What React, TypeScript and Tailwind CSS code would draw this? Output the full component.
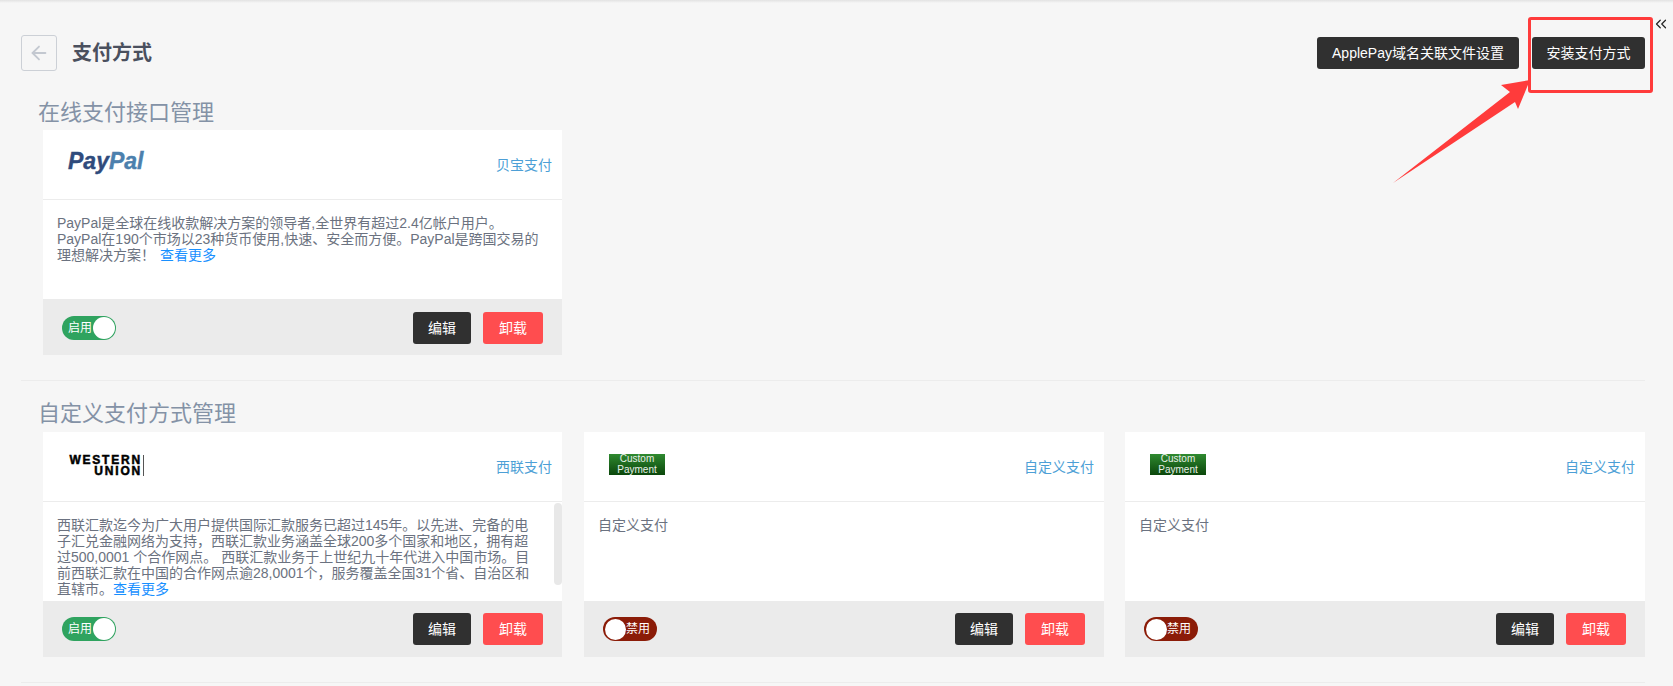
import { ArrowLeft, ChevronsLeft } from "lucide-react";
import type { ReactNode } from "react";

const FONT = "font-['Liberation_Sans','Noto_Sans_CJK_SC',sans-serif]";

function Toggle({ on }: { on: boolean }) {
  if (on) {
    return (
      <div className="flex h-[24px] w-[54px] items-center justify-between rounded-full bg-[#2fa35f] pl-[6px] pr-[1px] text-[12px] text-white">
        <span>启用</span>
        <span className="h-[22px] w-[22px] rounded-full bg-white" />
      </div>
    );
  }
  return (
    <div className="flex h-[24px] w-[54px] items-center justify-between rounded-full bg-[#8b1c08] pl-[2px] pr-[7px] text-[12px] text-white">
      <span className="h-[21px] w-[21px] rounded-full bg-white" />
      <span>禁用</span>
    </div>
  );
}

function Card({
  logo,
  label,
  on,
  scroll,
  narrow,
  lower,
  children,
}: {
  logo: ReactNode;
  label: string;
  on: boolean;
  scroll?: boolean;
  narrow?: boolean;
  lower?: boolean;
  children: ReactNode;
}) {
  return (
    <div className={narrow ? "w-[519px] bg-white" : "w-[520px] bg-white"}>
      <div className="relative h-[70px] border-b border-[#ececec]">
        {logo}
        <span className="absolute right-[10px] top-[26px] text-[14px] leading-[18px] text-[#4d9fd6]">{label}</span>
      </div>
      <div className="relative h-[99px] overflow-hidden pl-[14px] pr-[11px] pt-[15px] text-[14px] leading-[16px] text-[#6b7280]">
        <div className={scroll ? "w-[476px]" : ""}>{children}</div>
        {scroll && <div className="absolute right-0 top-[1px] h-[82px] w-[8px] rounded-[4px] bg-[#e8e8e8]" />}
      </div>
      <div
        className={
          lower
            ? "flex h-[56px] items-center justify-between bg-[#ebebeb] px-[19px] pt-[2px]"
            : "flex h-[56px] items-center justify-between bg-[#ebebeb] px-[19px]"
        }
      >
        <Toggle on={on} />
        <div className="flex gap-[12px]">
          <button className="h-[32px] w-[58px] rounded-[3px] bg-[#303030] text-[14px] text-white">编辑</button>
          <button className="h-[32px] w-[60px] rounded-[3px] bg-[#ff4d4f] text-[14px] text-white">卸载</button>
        </div>
      </div>
    </div>
  );
}

const PayPalLogo = (
  <div className="absolute left-[25px] top-[18px] text-[23px] font-bold italic leading-[26px] [-webkit-text-stroke:0.4px_currentColor]">
    <span className="text-[#2f4b7c]">Pay</span>
    <span className="text-[#4c80ad]">Pal</span>
  </div>
);

const WesternLogo = (
  <div className="absolute left-[26px] top-[23px] flex h-[21px] w-[75px] flex-col items-end border-r border-[#555] pr-[1px] text-[12px] font-bold leading-[10.5px] tracking-[1.8px] text-black [-webkit-text-stroke:0.5px_black]">
    <span>WESTERN</span>
    <span>UNION</span>
  </div>
);

const CustomLogo = (
  <div className="absolute left-[25px] top-[22px] flex h-[21px] w-[56px] flex-col items-center justify-center bg-gradient-to-b from-[#2f8a30] to-[#0b470b] text-[10px] leading-[10.5px] text-[#e8f0e8]">
    <span>Custom</span>
    <span>Payment</span>
  </div>
);

export default function App() {
  return (
    <div className={`relative h-[686px] overflow-hidden bg-[#f6f6f6] px-[21px] pt-[35px] ${FONT}`}>
      <div className="absolute inset-x-0 top-0 h-[3px] bg-gradient-to-b from-[#e2e2e2] to-[#f6f6f6]" />

      <div className="flex h-[36px] items-center justify-between pr-[7px]">
        <div className="flex items-center">
          <div className="flex h-[36px] w-[36px] items-center justify-center rounded-[3px] border border-[#ccd0d6]">
            <ArrowLeft size={22} className="text-[#c3c8d0]" />
          </div>
          <h1 className="ml-[15px] text-[20px] font-bold text-[#4a505e]">支付方式</h1>
        </div>
        <div className="flex gap-[13px]">
          <button className="h-[32px] w-[202px] rounded-[3px] bg-[#303030] text-[14px] text-white">
            ApplePay域名关联文件设置
          </button>
          <button className="h-[32px] w-[113px] rounded-[3px] bg-[#303030] text-[14px] text-white">安装支付方式</button>
        </div>
      </div>

      <h2 className="mt-[23px] h-[36px] pl-[17px] text-[22px] leading-[38px] text-[#8492a6]">在线支付接口管理</h2>
      <div className="ml-[22px]">
        <Card logo={PayPalLogo} label="贝宝支付" on narrow lower>
          PayPal是全球在线收款解决方案的领导者,全世界有超过2.4亿帐户用户。
          <br />
          PayPal在190个市场以23种货币使用,快速、安全而方便。PayPal是跨国交易的
          <br />
          理想解决方案！
          <span className="ml-[5px] text-[#1890ff]">查看更多</span>
        </Card>
      </div>

      <div className="mr-[7px] mt-[25px] h-px bg-[#ececec]" />

      <h2 className="mt-[15px] h-[36px] pl-[17px] text-[22px] leading-[36px] text-[#8492a6]">自定义支付方式管理</h2>
      <div className="ml-[22px] flex">
        <Card logo={WesternLogo} label="西联支付" on scroll narrow>
          西联汇款迄今为广大用户提供国际汇款服务已超过145年。以先进、完备的电子汇兑金融网络为支持，西联汇款业务涵盖全球200多个国家和地区，拥有超过500,0001 个合作网点。 西联汇款业务于上世纪九十年代进入中国市场。目前西联汇款在中国的合作网点逾28,0001个，服务覆盖全国31个省、自治区和直辖市。
          <span className="text-[#1890ff]">查看更多</span>
        </Card>
        <div className="ml-[22px]">
          <Card logo={CustomLogo} label="自定义支付" on={false}>
            自定义支付
          </Card>
        </div>
        <div className="ml-[21px]">
          <Card logo={CustomLogo} label="自定义支付" on={false}>
            自定义支付
          </Card>
        </div>
      </div>

      <div className="mr-[7px] mt-[25px] h-px bg-[#ececec]" />

      {/* annotation drawn over the page */}
      <div className="absolute left-[1528px] top-[17px] h-[76px] w-[125px] rounded-[3px] border-[3px] border-[#ff3b3b]" />
      <svg className="absolute left-[1390px] top-[78px]" width="145" height="108" viewBox="1390 78 145 108">
        <polygon points="1393,183 1510,92 1501,85 1530,80 1518,109 1515,102" fill="#ff3b3b" />
      </svg>
      <ChevronsLeft size={18} strokeWidth={1.6} className="absolute left-[1652px] top-[15px] text-[#222]" />
    </div>
  );
}
